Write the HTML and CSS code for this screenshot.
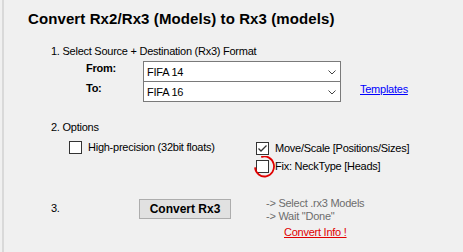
FILE: index.html
```html
<!DOCTYPE html>
<html lang="en">
<head>
    <meta charset="UTF-8">
    <title>Convert Rx3</title>
    <link rel="stylesheet" href="styles.css">
</head>
<body>
    <div class="panel">
        <h1 class="title">Convert Rx2/Rx3 (Models) to Rx3 (models)</h1>

        <p class="step-label">1. Select Source + Destination (Rx3) Format</p>
        <div class="format-grid">
            <label class="field-label">From:</label>
            <div class="combo">
                <span>FIFA 14</span>
                <svg class="chevron" width="8" height="5" viewBox="0 0 8 5"><path d="M0.5 0.5 L4 4 L7.5 0.5" fill="none" stroke="#444" stroke-width="1"/></svg>
            </div>
            <span></span>
            <label class="field-label">To:</label>
            <div class="combo">
                <span>FIFA 16</span>
                <svg class="chevron" width="8" height="5" viewBox="0 0 8 5"><path d="M0.5 0.5 L4 4 L7.5 0.5" fill="none" stroke="#444" stroke-width="1"/></svg>
            </div>
            <a class="link" href="#">Templates</a>
        </div>

        <p class="step-label step-options">2. Options</p>
        <div class="options">
            <div class="check">
                <span class="box"></span>
                <span>High-precision (32bit floats)</span>
            </div>
            <div class="option-col">
                <div class="check">
                    <span class="box">
                        <svg width="11" height="11" viewBox="0 0 11 11"><path d="M1.5 5.5 L4 8 L9.5 2.5" fill="none" stroke="#333" stroke-width="1.3"/></svg>
                    </span>
                    <span>Move/Scale [Positions/Sizes]</span>
                </div>
                <div class="check">
                    <span class="box"></span>
                    <span>Fix: NeckType [Heads]</span>
                    <svg class="mark" width="22" height="22" viewBox="0 0 22 22"><path d="M7.25 1.1 A9.5 10 0 1 1 1.04 11.4" fill="none" stroke="#e00000" stroke-width="1.8"/></svg>
                </div>
            </div>
        </div>

        <div class="step-run">
            <span class="step-num">3.</span>
            <button class="run-btn">Convert Rx3</button>
            <div class="notes">
                <div>-&gt; Select .rx3 Models</div>
                <div>-&gt; Wait "Done"</div>
                <a class="info-link" href="#">Convert Info !</a>
            </div>
        </div>
    </div>
</body>
</html>
```

FILE: styles.css
```css
body {
    margin: 0;
    background-color: #f0f0f0;
    font-family: "Liberation Sans", Arial, sans-serif;
    font-size: 11px;
    letter-spacing: -0.25px;
    color: #000;
}
.panel {
    margin-left: 2px;
    border-left: 2px solid #d9d9d9;
    height: 252px;
    box-sizing: border-box;
    padding-top: 10px;
}
.title {
    margin: 0 0 0 24px;
    font-size: 15px;
    line-height: 17px;
    font-weight: bold;
    letter-spacing: 0.1px;
}
.step-label {
    margin: 18px 0 0 47px;
    line-height: 13px;
}
.format-grid {
    display: grid;
    grid-template-columns: 57px 198px auto;
    grid-template-rows: 20px 20px;
    margin: 3px 0 0 82px;
}
.field-label {
    font-weight: bold;
    line-height: 13px;
    padding-top: 1px;
}
.combo {
    height: 21px;
    box-sizing: border-box;
    border: 1px solid #7a7a7a;
    background-color: #fff;
    display: flex;
    align-items: center;
    justify-content: space-between;
    padding: 1px 4px 0 3px;
}
.chevron {
    display: block;
}
.link {
    color: #0000ff;
    line-height: 13px;
    padding-top: 2px;
    margin-left: 19px;
    justify-self: start;
}
.step-options {
    margin-top: 20px;
}
.options {
    display: grid;
    grid-template-columns: 187px auto;
    margin: 7px 0 0 65px;
}
.option-col {
    display: flex;
    flex-direction: column;
    gap: 5px;
    margin-top: 1px;
}
.check {
    position: relative;
    display: flex;
    align-items: center;
    gap: 6px;
    height: 13px;
    line-height: 13px;
}
.box {
    width: 13px;
    height: 13px;
    box-sizing: border-box;
    border: 1px solid #333;
    background-color: #fff;
    display: flex;
}
.mark {
    position: absolute;
    left: -2px;
    top: -4px;
}
.step-run {
    display: flex;
    align-items: flex-start;
    margin: 24px 0 0 47px;
}
.step-num {
    width: 88px;
    margin-top: 5px;
    line-height: 13px;
}
.run-btn {
    width: 92px;
    height: 20px;
    margin-top: 2px;
    padding: 0;
    background-color: #e1e1e1;
    border: 1px solid #adadad;
    font-family: "Liberation Sans", Arial, sans-serif;
    font-size: 12px;
    font-weight: bold;
    letter-spacing: 0;
    color: #000;
}
.notes {
    margin-left: 35px;
    line-height: 13px;
    color: #6d6d6d;
}
.info-link {
    display: inline-block;
    margin: 3px 0 0 18px;
    color: #e00000;
}
```
